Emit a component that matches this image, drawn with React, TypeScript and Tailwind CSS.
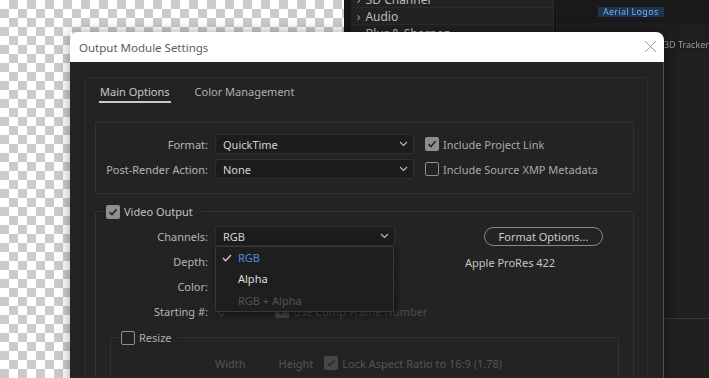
import React from 'react';

type CheckProps = { checked?: boolean; dim?: boolean };

const Check: React.FC<CheckProps> = ({ checked, dim }) => (
    <span
        className={`w-[14px] h-[14px] shrink-0 rounded-[2px] flex items-center justify-center ${
            checked ? (dim ? 'bg-[#474747]' : 'bg-[#8e8e8e]') : 'border-[1.5px] border-[#8e8e8e]'
        }`}
    >
        {checked && (
            <svg width="10" height="10" viewBox="0 0 10 10">
                <path d="M1.6 5.2 L4 7.6 L8.5 2.3" stroke={dim ? '#2b2b2b' : '#262626'} strokeWidth="1.7" fill="none" />
            </svg>
        )}
    </span>
);

const Chevron = () => (
    <svg width="9" height="6" viewBox="0 0 9 6">
        <path d="M1 1 L4.5 4.5 L8 1" stroke="#bdbdbd" strokeWidth="1.1" fill="none" />
    </svg>
);

const Select: React.FC<{ value?: string; className?: string; children?: React.ReactNode }> = ({ value, className, children }) => (
    <div className={`relative h-[20px] ${className ?? ''}`}>
        <div className="h-full bg-[#1c1c1c] border border-[#2f2f2f] rounded-[2px] flex items-center justify-between pl-[7px] pr-[5px] text-[#d4d4d4]">
            <span>{value}</span>
            <Chevron />
        </div>
        {children}
    </div>
);

const Label: React.FC<{ children: React.ReactNode }> = ({ children }) => (
    <div className="w-[119px] shrink-0 text-right pr-[7px] text-[#b5b5b5]">{children}</div>
);

export default function App() {
    return (
        <div className="relative w-[709px] h-[378px] overflow-hidden flex font-['Noto_Sans',sans-serif] text-[11px] leading-[15px]">
            {/* transparency grid */}
            <div className="w-[345px] h-full bg-[conic-gradient(#cbcbcb_25%,#ffffff_0_50%,#cbcbcb_0_75%,#ffffff_0)] bg-[length:18px_18px]" />
            <div className="w-[7px] h-full bg-[#171717]" />

            {/* effects list behind the dialog */}
            <div className="w-[203px] h-full bg-[#222222] flex flex-col -mt-[9px] text-[12px] text-[#bdbdbd]">
                {['3D Channel', 'Audio', 'Blur & Sharpen', 'Channel'].map((name) => (
                    <div key={name} className="h-[17px] shrink-0 flex items-center gap-[5px] pl-[6px] border-b border-[#2b2b2b]">
                        <span className="text-[#9a9a9a]">›</span>
                        {name}
                    </div>
                ))}
            </div>
            <div className="w-[3px] h-full bg-[#161616] border-l border-[#2c2c2c]" />

            <div className="flex-1 h-full bg-[#1e1e1e] flex flex-col">
                <div className="h-[23px] bg-[#191919] flex items-center pl-[42px]">
                    <span className="px-[5px] h-[10px] bg-[#1c3555] text-[9px] leading-[10px] tracking-[0.3px] text-[#7fa8e0] blur-[0.6px]">Aerial Logos</span>
                </div>
                <div className="pl-[108px] pt-[14px] text-[9px] whitespace-nowrap text-[#9a9a9a] blur-[0.6px]">3D Tracker</div>
                <div className="flex-1 flex">
                    <div className="w-[117px]" />
                    <div className="w-px bg-[#191919]" />
                    <div className="flex-1 bg-[#202020]" />
                </div>
                <div className="h-[60px] border-t border-[#363636] flex">
                    <div className="w-[105px]" />
                    <div className="flex-1 bg-[#202020]" />
                </div>
            </div>

            {/* dialog window */}
            <div className="absolute left-[70px] top-[32px] w-[594px] h-[360px] flex flex-col shadow-[0_0_12px_rgba(0,0,0,0.35)]">
                <div className="h-[30px] shrink-0 bg-white rounded-t-[8px] flex items-center justify-between pl-[9px] pr-[7px]">
                    <span className="text-[11.5px] text-[#5c5c5c]">Output Module Settings</span>
                    <svg width="13" height="13" viewBox="0 0 13 13" className="-mt-[2px]">
                        <path d="M1 1 L12 12 M12 1 L1 12" stroke="#9a9a9a" strokeWidth="1" />
                    </svg>
                </div>

                <div className="flex-1 bg-[#232323] border-r border-[#4f4f4f] pl-[15px] pr-[15px] pt-[15px]">
                    <div className="h-full border border-[#2f2f2f] rounded-[4px] pl-[9px] pr-[13px]">
                        {/* tabs */}
                        <div className="flex items-end gap-[24px] ml-[4px] text-[11px]">
                            <div className="pt-[6px] pb-[2px] px-[1px] border-b-2 border-[#c9c9c9] text-[#c9c9c9]">Main Options</div>
                            <div className="pt-[6px] pb-[4px] text-[#b0b0b0]">Color Management</div>
                        </div>

                        {/* format group */}
                        <div className="mt-[19px] border border-[#313131] rounded-[2px] pt-[11px] pb-[14px] flex flex-col gap-[5px]">
                            <div className="flex items-center h-[20px]">
                                <Label>Format:</Label>
                                <Select value="QuickTime" className="w-[199px]" />
                                <div className="ml-[11px] flex items-center gap-[4px] text-[#a9a9a9]">
                                    <Check checked />
                                    Include Project Link
                                </div>
                            </div>
                            <div className="flex items-center h-[20px]">
                                <Label>Post-Render Action:</Label>
                                <Select value="None" className="w-[199px]" />
                                <div className="ml-[11px] flex items-center gap-[4px] text-[#a9a9a9]">
                                    <Check />
                                    Include Source XMP Metadata
                                </div>
                            </div>
                        </div>

                        {/* video output */}
                        <fieldset className="mt-[10px] border border-[#313131] rounded-[2px] pb-[20px]">
                            <legend className="ml-[8px] pl-[2px] pr-[8px] flex items-center gap-[4px] text-[#c2c2c2]">
                                <Check checked />
                                Video Output
                            </legend>
                            <div className="pt-[7px] flex flex-col gap-[5px]">
                                <div className="flex items-center h-[20px]">
                                    <Label>Channels:</Label>
                                    <Select value="RGB" className="w-[180px] z-10">
                                        <div className="absolute left-0 top-full w-[179px] h-[66px] bg-[#1e1e1e] border border-[#393939] rounded-b-[2px] shadow-[2px_3px_6px_rgba(0,0,0,0.5)] flex flex-col">
                                            <div className="h-[22px] flex items-center">
                                                <svg width="22" height="10" viewBox="0 0 22 10">
                                                    <path d="M7 5 L9.6 7.7 L15 2" stroke="#cfcfcf" strokeWidth="1.3" fill="none" />
                                                </svg>
                                                <span className="text-[#4a90dc]">RGB</span>
                                            </div>
                                            <div className="h-[22px] flex items-center pl-[22px] text-[#dedede]">Alpha</div>
                                            <div className="h-[22px] flex items-center pl-[22px] text-[#535353]">RGB + Alpha</div>
                                        </div>
                                    </Select>
                                    <button className="ml-[89px] w-[119px] h-[19px] rounded-full border border-[#8a8a8a] text-[#cacaca] leading-none">
                                        Format Options...
                                    </button>
                                </div>
                                <div className="flex items-center h-[20px]">
                                    <Label>Depth:</Label>
                                    <Select className="w-[180px]" />
                                    <span className="ml-[70px] mt-[3px] text-[#c3c3c3]">Apple ProRes 422</span>
                                </div>
                                <div className="flex items-center h-[20px]">
                                    <Label>Color:</Label>
                                    <Select className="w-[180px]" />
                                </div>
                                <div className="flex items-center h-[20px]">
                                    <Label>Starting #:</Label>
                                    <span className="w-[60px] pl-[3px] text-[#4e4e4e]">0</span>
                                    <div className="flex items-center gap-[4px] text-[#4c4c4c]">
                                        <Check checked dim />
                                        Use Comp Frame Number
                                    </div>
                                </div>
                            </div>

                            {/* resize */}
                            <fieldset className="mt-[9px] ml-[14px] mr-[14px] border border-[#313131] rounded-[2px] pb-[20px]">
                                <legend className="ml-[8px] pl-[2px] pr-[6px] flex items-center gap-[4px] text-[#b3a9bb]">
                                    <Check />
                                    Resize
                                </legend>
                                <div className="pt-[8px] h-[28px] flex items-center text-[#565358]">
                                    <span className="ml-[104px]">Width</span>
                                    <span className="ml-[33px]">Height</span>
                                    <div className="ml-[11px] flex items-center gap-[4px]">
                                        <Check checked dim />
                                        Lock Aspect Ratio to 16:9 (1.78)
                                    </div>
                                </div>
                            </fieldset>
                        </fieldset>
                    </div>
                </div>
            </div>
        </div>
    );
}
